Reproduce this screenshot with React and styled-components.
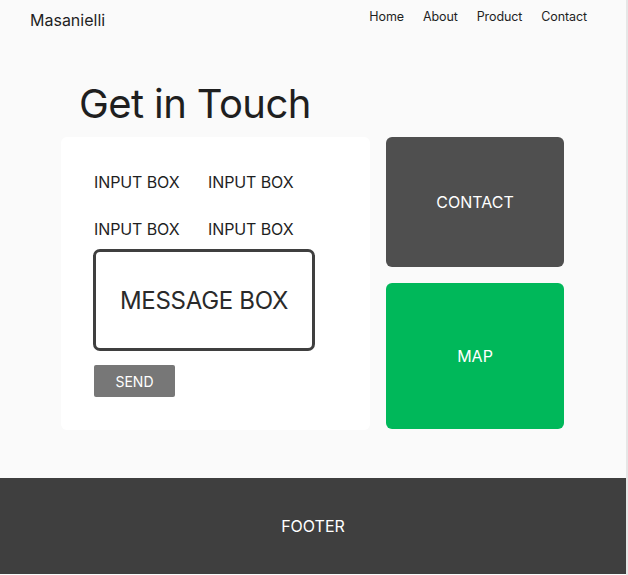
import React from 'react';
import styled, { createGlobalStyle } from 'styled-components';

const GlobalStyle = createGlobalStyle`
  * { box-sizing: border-box; }
  body {
    margin: 0;
    background: #fafafa;
    font-family: Inter, "Noto Sans", sans-serif;
    color: #1f1f1f;
  }
`;

const navLinks = ['Home', 'About', 'Product', 'Contact'];

function App() {
  return (
    <Page>
      <GlobalStyle />
      <Header>
        <Logo>Masanielli</Logo>
        <Nav>
          {navLinks.map((link) => (
            <NavLink key={link}>{link}</NavLink>
          ))}
        </Nav>
      </Header>
      <Main>
        <Title>Get in Touch</Title>
        <Content>
          <FormCard>
            <InputGrid>
              <InputLabel>INPUT BOX</InputLabel>
              <InputLabel>INPUT BOX</InputLabel>
              <InputLabel>INPUT BOX</InputLabel>
              <InputLabel>INPUT BOX</InputLabel>
            </InputGrid>
            <MessageBox>MESSAGE BOX</MessageBox>
            <SendButton>SEND</SendButton>
          </FormCard>
          <SideColumn>
            <InfoCard $bg="#4f4f4f" $height={130}>CONTACT</InfoCard>
            <InfoCard $bg="#00b85a" $height={146}>MAP</InfoCard>
          </SideColumn>
        </Content>
      </Main>
      <Footer>FOOTER</Footer>
    </Page>
  );
}

export default App;

const Page = styled.div`
  width: 628px;
  min-height: 575px;
  border-right: 2px solid #e6e6e6;
  display: flex;
  flex-direction: column;
`;

const Header = styled.header`
  display: flex;
  justify-content: space-between;
  align-items: flex-start;
  padding: 10px 39px 0 30px;
  height: 50px;
`;

const Logo = styled.div`
  font-size: 16px;
  line-height: 20px;
  color: #1f1f1f;
`;

const Nav = styled.nav`
  display: flex;
  gap: 19px;
`;

const NavLink = styled.a`
  font-size: 12.5px;
  line-height: 13px;
  letter-spacing: -0.1px;
  color: #1f1f1f;
  cursor: pointer;
`;

const Main = styled.main`
  padding: 30px 0 0 61px;
  height: 428px;
`;

const Title = styled.h1`
  margin: 0 0 9px 18px;
  font-size: 40px;
  font-weight: 400;
  line-height: 48px;
  letter-spacing: -0.6px;
  color: #1f1f1f;
`;

const Content = styled.div`
  display: flex;
  gap: 16px;
  align-items: flex-start;
`;

const FormCard = styled.div`
  width: 309px;
  height: 293px;
  background: #ffffff;
  border-radius: 6px;
  padding: 35px 0 0 32px;
`;

const InputGrid = styled.div`
  display: grid;
  grid-template-columns: 114px auto;
  row-gap: 27px;
  padding-left: 1px;
`;

const InputLabel = styled.div`
  font-size: 16px;
  line-height: 20px;
  letter-spacing: -0.1px;
  color: #1f1f1f;
`;

const MessageBox = styled.div`
  margin-top: 10px;
  width: 222px;
  height: 102px;
  border: 3px solid #3f3f3f;
  border-radius: 7px;
  display: flex;
  align-items: center;
  justify-content: center;
  font-size: 24px;
  letter-spacing: -0.3px;
  color: #2a2a2a;
`;

const SendButton = styled.button`
  margin-top: 14px;
  margin-left: 1px;
  width: 81px;
  height: 32px;
  border: none;
  border-radius: 2px;
  background: #777777;
  color: #ffffff;
  font-family: Inter, "Noto Sans", sans-serif;
  font-size: 14px;
  cursor: pointer;
`;

const SideColumn = styled.div`
  display: flex;
  flex-direction: column;
  gap: 16px;
`;

const InfoCard = styled.div`
  width: 178px;
  height: ${(p) => p.$height}px;
  background: ${(p) => p.$bg};
  border-radius: 6px;
  color: #ffffff;
  font-size: 16px;
  display: flex;
  align-items: center;
  justify-content: center;
`;

const Footer = styled.footer`
  height: 96px;
  background: #3f3f3f;
  color: #ffffff;
  font-size: 16px;
  display: flex;
  align-items: center;
  justify-content: center;
`;
